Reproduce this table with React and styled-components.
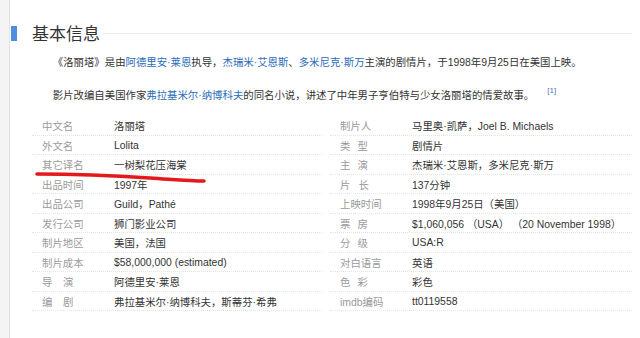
import React from 'react'
import styled, { createGlobalStyle } from 'styled-components'

const GlobalStyle = createGlobalStyle`
  html, body {
    margin: 0;
    padding: 0;
    background: #fff;
  }
  body {
    font-family: "Liberation Sans", "Noto Sans CJK SC", sans-serif;
    font-size: 10.4px;
    color: #333;
  }
`

const Page = styled.div`
  position: relative;
  display: flex;
  width: 640px;
  height: 338px;
  overflow: hidden;
`

const Side = styled.div`
  width: 10px;
  background: #f4f4f4;
  border-right: 1px solid #e2e2e2;
`

const Main = styled.div`
  flex: 1;
  padding: 25px 8px 0 1px;
`

const TitleRow = styled.div`
  display: flex;
  align-items: center;
  height: 16px;
`

const TitleBar = styled.div`
  width: 6px;
  height: 15px;
  background: #4e8de0;
`

const Title = styled.h2`
  margin: 0 3px 0 15px;
  font-family: "Noto Sans CJK SC", sans-serif;
  font-size: 17px;
  font-weight: 400;
  line-height: 16px;
  color: #333;
`

const TitleLine = styled.div`
  flex: 1;
  height: 1px;
  background: #ececec;
`

const Summary = styled.div`
  margin: 12px 0 0 21px;
`

const Para = styled.p`
  margin: 0 0 13px;
  line-height: 20px;
  text-indent: 2em;
  color: #333;
`

const Link = styled.a`
  color: #2b6cb8;
  text-decoration: none;
`

const Ref = styled.sup`
  margin-left: 13px;
  font-size: 8px;
  color: #4a72b8;
  vertical-align: 6px;
  line-height: 0;
`

const Table = styled.div`
  display: grid;
  grid-template-columns: 290px 302px;
  column-gap: 8px;
  margin: -3px 0 0 21px;
`

const Column = styled.div`
  display: flex;
  flex-direction: column;
`

const Row = styled.div`
  display: flex;
  align-items: center;
  height: 19.5px;
  border-bottom: 1px dotted #e4e4e4;
  box-sizing: border-box;
  padding-top: 1px;
  white-space: nowrap;
`

const Label = styled.span`
  width: 72px;
  padding-left: 10px;
  color: #9a9a9a;
  letter-spacing: ${p => p.$spread || 0}px;
`

const Value = styled.span`
  color: #333;
`

const Mark = styled.svg`
  position: absolute;
  left: 0;
  top: 0;
  pointer-events: none;
`

const left = [
  ['中文名', '洛丽塔'],
  ['外文名', 'Lolita'],
  ['其它译名', '一树梨花压海棠'],
  ['出品时间', '1997年'],
  ['出品公司', 'Guild，Pathé'],
  ['发行公司', '狮门影业公司'],
  ['制片地区', '美国，法国'],
  ['制片成本', '$58,000,000 (estimated)'],
  ['导演', '阿德里安·莱恩', 10.5],
  ['编剧', '弗拉基米尔·纳博科夫，斯蒂芬·希弗', 10.5],
]

const right = [
  ['制片人', '马里奥·凯萨，Joel B. Michaels'],
  ['类型', '剧情片', 7],
  ['主演', '杰瑞米·艾恩斯，多米尼克·斯万', 7],
  ['片长', '137分钟', 8],
  ['上映时间', '1998年9月25日（美国）'],
  ['票房', '$1,060,056 （USA） （20 November 1998）', 7],
  ['分级', 'USA:R', 7],
  ['对白语言', '英语'],
  ['色彩', '彩色', 7],
  ['imdb编码', 'tt0119558'],
]

function InfoColumn({ rows }) {
  return (
    <Column>
      {rows.map(([label, value, spread]) => (
        <Row key={label}>
          <Label $spread={spread}>{label}</Label>
          <Value>{value}</Value>
        </Row>
      ))}
    </Column>
  )
}

export default function App() {
  return (
    <>
      <GlobalStyle />
      <Page>
        <Side />
        <Main>
          <TitleRow>
            <TitleBar />
            <Title>基本信息</Title>
            <TitleLine />
          </TitleRow>
          <Summary>
            <Para>
              《洛丽塔》是由<Link>阿德里安·莱恩</Link>执导，<Link>杰瑞米·艾恩斯</Link>、<Link>多米尼克·斯万</Link>主演的剧情片，于1998年9月25日在美国上映。
            </Para>
            <Para>
              影片改编自美国作家<Link>弗拉基米尔·纳博科夫</Link>的同名小说，讲述了中年男子亨伯特与少女洛丽塔的情爱故事。<Ref>[1]</Ref>
            </Para>
          </Summary>
          <Table>
            <InfoColumn rows={left} />
            <InfoColumn rows={right} />
          </Table>
        </Main>
        <Mark width="640" height="338" viewBox="0 0 640 338">
          <path
            d="M37 174 C 70 174, 120 176, 150 178 S 190 181, 204 181"
            fill="none"
            stroke="#e3191c"
            strokeWidth="3.5"
            strokeLinecap="round"
          />
        </Mark>
      </Page>
    </>
  )
}
